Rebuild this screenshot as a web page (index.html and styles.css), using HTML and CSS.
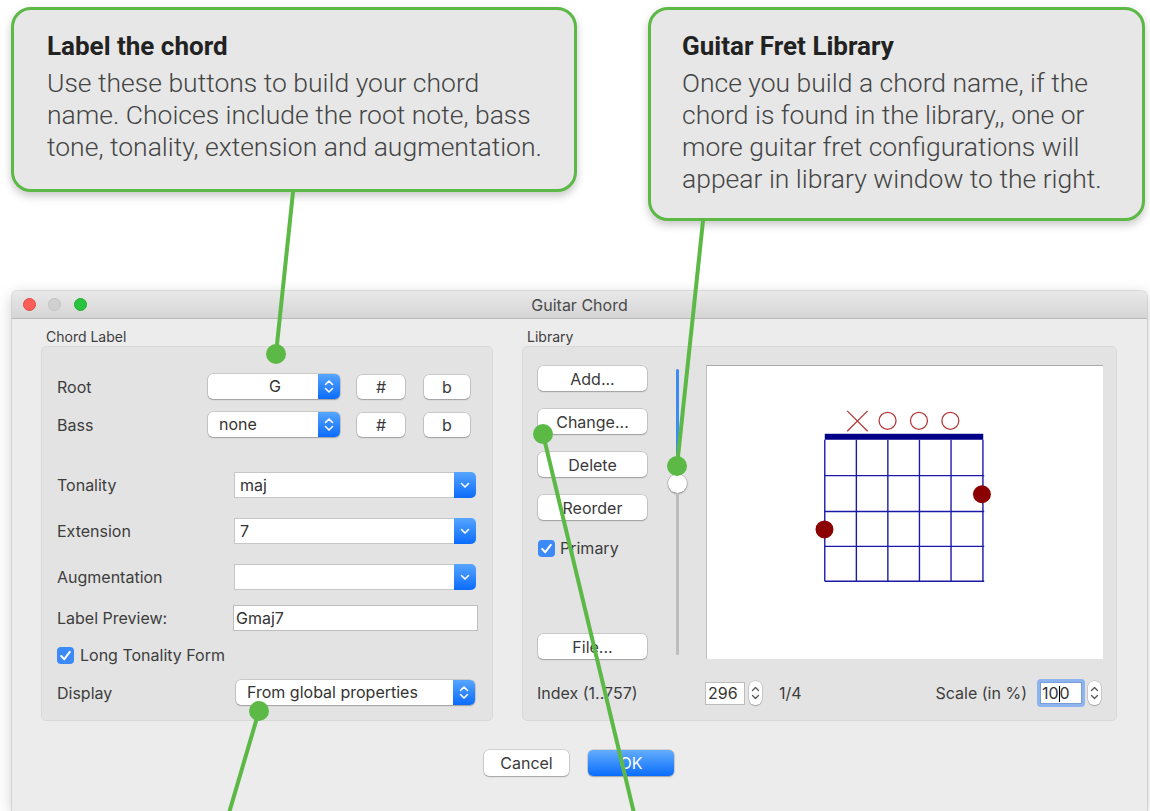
FILE: index.html
```html
<!DOCTYPE html>
<html lang="en">
<head>
    <meta charset="UTF-8">
    <title>Guitar Chord</title>
    <link rel="stylesheet" href="styles.css">
</head>
<body>
<div id="page">
    <div id="callouts">
        <div class="callout callout-left">
            <h2>Label the chord</h2>
            <p>Use these buttons to build your chord<br>name. Choices include the root note, bass<br>tone, tonality, extension and augmentation.</p>
        </div>
        <div class="callout callout-right">
            <h2>Guitar Fret Library</h2>
            <p>Once you build a chord name, if the<br>chord is found in the library,, one or<br>more guitar fret configurations will<br>appear in library window to the right.</p>
        </div>
    </div>

    <div id="window">
        <div class="titlebar">
            <div class="lights">
                <span class="light red"></span>
                <span class="light gray"></span>
                <span class="light green"></span>
            </div>
            <div class="title">Guitar Chord</div>
            <div></div>
        </div>

        <div class="content">
            <div class="groups">
                <div class="group chord-group">
                    <div class="group-label">Chord Label</div>
                    <div class="box chord-box">
                        <div class="row">
                            <span class="lbl lbl-pop">Root</span>
                            <div class="popup popup-note">
                                <span class="pop-text center">G</span>
                                <span class="stepper"><svg viewBox="0 0 22 25"><path d="M7.5 10.5 L11 7 L14.5 10.5 M7.5 14.5 L11 18 L14.5 14.5"/></svg></span>
                            </div>
                            <div class="btn mini sharp">#</div>
                            <div class="btn mini flat">b</div>
                        </div>
                        <div class="row row-bass">
                            <span class="lbl lbl-pop">Bass</span>
                            <div class="popup popup-note">
                                <span class="pop-text">none</span>
                                <span class="stepper"><svg viewBox="0 0 22 25"><path d="M7.5 10.5 L11 7 L14.5 10.5 M7.5 14.5 L11 18 L14.5 14.5"/></svg></span>
                            </div>
                            <div class="btn mini sharp">#</div>
                            <div class="btn mini flat">b</div>
                        </div>
                        <div class="row row-tonality">
                            <span class="lbl lbl-combo">Tonality</span>
                            <div class="combo">
                                <span class="combo-text">maj</span>
                                <span class="combo-arrow"><svg viewBox="0 0 22 26"><path d="M7.5 11.5 L11 15 L14.5 11.5"/></svg></span>
                            </div>
                        </div>
                        <div class="row row-gap">
                            <span class="lbl lbl-combo">Extension</span>
                            <div class="combo">
                                <span class="combo-text">7</span>
                                <span class="combo-arrow"><svg viewBox="0 0 22 26"><path d="M7.5 11.5 L11 15 L14.5 11.5"/></svg></span>
                            </div>
                        </div>
                        <div class="row row-gap">
                            <span class="lbl lbl-combo">Augmentation</span>
                            <div class="combo">
                                <span class="combo-text"></span>
                                <span class="combo-arrow"><svg viewBox="0 0 22 26"><path d="M7.5 11.5 L11 15 L14.5 11.5"/></svg></span>
                            </div>
                        </div>
                        <div class="row row-preview">
                            <span class="lbl lbl-preview">Label Preview:</span>
                            <div class="field preview-field">Gmaj7</div>
                        </div>
                        <div class="row row-check">
                            <span class="check"><svg viewBox="0 0 17 17"><path d="M4.2 9 L7.3 12.2 L12.8 4.8"/></svg></span>
                            <span class="check-text">Long Tonality Form</span>
                        </div>
                        <div class="row row-display">
                            <span class="lbl lbl-display">Display</span>
                            <div class="popup popup-display">
                                <span class="pop-text">From global properties</span>
                                <span class="stepper"><svg viewBox="0 0 22 25"><path d="M7.5 10.5 L11 7 L14.5 10.5 M7.5 14.5 L11 18 L14.5 14.5"/></svg></span>
                            </div>
                        </div>
                    </div>
                </div>

                <div class="group library-group">
                    <div class="group-label">Library</div>
                    <div class="box library-box">
                        <div class="lib-top">
                            <div class="lib-buttons">
                                <div class="btn lib-btn">Add...</div>
                                <div class="btn lib-btn">Change...</div>
                                <div class="btn lib-btn">Delete</div>
                                <div class="btn lib-btn">Reorder</div>
                                <div class="lib-check">
                                    <span class="check small"><svg viewBox="0 0 17 17"><path d="M4.2 9 L7.3 12.2 L12.8 4.8"/></svg></span>
                                    <span class="check-text">Primary</span>
                                </div>
                                <div class="btn lib-btn file-btn">File...</div>
                            </div>
                            <div class="slider">
                                <span class="track track-on"></span>
                                <span class="knob"></span>
                                <span class="track track-off"></span>
                            </div>
                            <div class="view">
                                <svg class="diagram" viewBox="0 0 397 294">
                                    <g class="marks">
                                        <path d="M140.5 45 L161 65.5 M140.5 65.5 L161 45"/>
                                        <circle cx="181" cy="55" r="8.5"/>
                                        <circle cx="212.5" cy="55" r="8.5"/>
                                        <circle cx="244" cy="55" r="8.5"/>
                                    </g>
                                    <rect class="nut" x="118" y="68" width="159" height="6"/>
                                    <g class="grid">
                                        <path d="M118 74 V216 M149.7 74 V216 M181.3 74 V216 M213 74 V216 M244.7 74 V216 M276.7 74 V216"/>
                                        <path d="M118 110 H278 M118 146 H278 M118 181 H278 M118 216 H278"/>
                                    </g>
                                    <circle class="dot" cx="275.7" cy="128.7" r="9"/>
                                    <circle class="dot" cx="117.7" cy="164" r="9"/>
                                </svg>
                            </div>
                        </div>
                        <div class="lib-bottom">
                            <span class="index-label">Index (1..757)</span>
                            <div class="field num-field">296</div>
                            <span class="mini-stepper"><svg viewBox="0 0 13 24"><path d="M3.5 9.5 L6.5 6.5 L9.5 9.5 M3.5 14.5 L6.5 17.5 L9.5 14.5"/></svg></span>
                            <span class="count">1/4</span>
                            <span class="spacer"></span>
                            <span class="scale-label">Scale (in %)</span>
                            <div class="focus-ring"><div class="field scale-field">10<span class="caret"></span>0</div></div>
                            <span class="mini-stepper scale-stepper"><svg viewBox="0 0 13 24"><path d="M3.5 9.5 L6.5 6.5 L9.5 9.5 M3.5 14.5 L6.5 17.5 L9.5 14.5"/></svg></span>
                        </div>
                    </div>
                </div>
            </div>

            <div class="actions">
                <div class="btn action">Cancel</div>
                <div class="btn action ok">OK</div>
            </div>
        </div>
    </div>

    <svg id="pointers" viewBox="0 0 1150 811">
        <line x1="293" y1="192" x2="276" y2="354"/>
        <circle cx="276" cy="354" r="10"/>
        <line x1="703" y1="221" x2="677" y2="466"/>
        <circle cx="677" cy="466" r="10"/>
        <line x1="259" y1="711" x2="229" y2="813"/>
        <circle cx="259" cy="711" r="10"/>
        <line x1="543" y1="434" x2="634" y2="813"/>
        <circle cx="543" cy="434" r="10"/>
    </svg>
</div>
</body>
</html>
```

FILE: styles.css
```css
* {
    margin: 0;
    padding: 0;
    box-sizing: border-box;
}

body {
    width: 1150px;
    height: 811px;
    overflow: hidden;
    background: #fff;
    font-family: Inter, "Liberation Sans", sans-serif;
    color: #333;
}

#page {
    position: relative;
    height: 811px;
}

/* callouts */
#callouts {
    display: flex;
    align-items: flex-start;
    height: 291px;
    padding: 7px 0 0 11px;
}

.callout {
    background: #e6e7e6;
    border: 3px solid #5cb946;
    border-radius: 20px;
    box-shadow: 0 4px 8px rgba(0, 0, 0, 0.22);
    font-family: "Roboto Light", Roboto, "Liberation Sans", sans-serif;
    padding: 20px 10px 0 33px;
}

.callout h2 {
    font-family: Roboto, "Liberation Sans", sans-serif;
    font-size: 26px;
    font-weight: 700;
    line-height: 32px;
    color: #222;
    margin-bottom: 5px;
}

.callout p {
    font-size: 26.5px;
    font-weight: 300;
    line-height: 32px;
    color: #444;
    white-space: nowrap;
}

.callout-left {
    width: 566px;
    height: 185px;
}

.callout-right {
    width: 497px;
    height: 214px;
    margin-left: 71px;
    padding-left: 31px;
}

/* window */
#window {
    margin-left: 12px;
    width: 1135px;
    height: 520px;
    background: #ececec;
    border-radius: 5px 5px 0 0;
    box-shadow: 0 0 0 1px rgba(0, 0, 0, 0.1), 0 4px 16px rgba(0, 0, 0, 0.2);
    overflow: hidden;
}

.titlebar {
    height: 28px;
    display: grid;
    grid-template-columns: 1fr auto 1fr;
    align-items: center;
    background: linear-gradient(#e9e9e9, #d5d5d5);
    border-bottom: 1px solid #b9b9b9;
}

.lights {
    display: flex;
    gap: 12.5px;
    padding-left: 10.5px;
}

.light {
    width: 13px;
    height: 13px;
    border-radius: 50%;
}

.red {
    background: #fc5f57;
    border: 1px solid #e2463f;
}

.gray {
    background: #d0d0d0;
    border: 1px solid #c2c2c2;
}

.green {
    background: #2ac33f;
    border: 1px solid #1eac2c;
}

.title {
    font-size: 16px;
    color: #4a4a4a;
}

.content {
    padding: 10px 30px 0 29px;
}

.groups {
    display: flex;
    gap: 29px;
}

.group-label {
    font-size: 14px;
    line-height: 16px;
    margin-left: 5px;
    color: #3c3c3c;
}

.box {
    margin-top: 1px;
    height: 375px;
    background: #e3e3e3;
    border: 1px solid #d9d9d9;
    border-radius: 5px;
}

.chord-group {
    width: 452px;
}

.library-group {
    width: 595px;
}

/* chord label box */
.chord-box {
    padding: 27px 0 0 15px;
}

.row {
    display: flex;
    align-items: center;
    font-size: 16px;
    color: #3d3d3d;
}

.row-bass {
    margin-top: 13px;
}

.row-tonality {
    margin-top: 35px;
}

.row-gap {
    margin-top: 20px;
}

.row-preview {
    margin-top: 15px;
}

.row-check {
    margin-top: 14px;
}

.row-display {
    margin-top: 15px;
}

.lbl-pop {
    width: 151px;
}

.lbl-combo {
    width: 177px;
}

.lbl-preview {
    width: 176px;
}

.lbl-display {
    width: 179px;
}

.popup {
    display: flex;
    height: 25px;
    background: #fff;
    border-radius: 5px;
    box-shadow: 0 0 0 0.5px rgba(0, 0, 0, 0.22), 0 1px 1.5px rgba(0, 0, 0, 0.22);
}

.popup-note {
    width: 132px;
}

.popup-display {
    width: 239px;
}

.pop-text {
    flex: 1;
    line-height: 25px;
    padding-left: 11px;
    color: #333;
}

.pop-text.center {
    text-align: center;
    padding-left: 24px;
}

.stepper {
    width: 22px;
    border-radius: 0 5px 5px 0;
    background: linear-gradient(#57a5ff, #0b6cfb);
}

.stepper svg,
.combo-arrow svg {
    display: block;
    width: 100%;
    height: 100%;
    fill: none;
    stroke: #fff;
    stroke-width: 1.6;
    stroke-linecap: round;
    stroke-linejoin: round;
}

.btn {
    display: flex;
    align-items: center;
    justify-content: center;
    background: #fff;
    border-radius: 5px;
    box-shadow: 0 0 0 0.5px rgba(0, 0, 0, 0.22), 0 1px 1.5px rgba(0, 0, 0, 0.22);
    font-size: 16px;
    color: #3a3a3a;
}

.mini {
    height: 24px;
}

.sharp {
    width: 48px;
    margin-left: 17px;
}

.flat {
    width: 46px;
    margin-left: 19px;
}

.combo {
    display: flex;
    width: 242px;
    height: 26px;
}

.combo-text {
    flex: 1;
    background: #fff;
    border: 1px solid #c6c6c6;
    border-right: 0;
    line-height: 24px;
    padding-left: 5px;
    color: #333;
}

.combo-arrow {
    width: 22px;
    border-radius: 0 5px 5px 0;
    background: linear-gradient(#57a5ff, #0b6cfb);
}

.field {
    background: #fff;
    border: 1px solid #bdbdbd;
    color: #333;
}

.preview-field {
    width: 245px;
    height: 26px;
    line-height: 24px;
    padding-left: 2px;
}

.check {
    width: 17px;
    height: 17px;
    border-radius: 4px;
    background: #3b8af7;
}

.check svg {
    display: block;
    width: 17px;
    height: 17px;
    fill: none;
    stroke: #fff;
    stroke-width: 2;
    stroke-linecap: round;
    stroke-linejoin: round;
}

.check-text {
    margin-left: 6px;
}

/* library box */
.library-box {
    padding: 18px 13px 0 15px;
}

.lib-top {
    display: flex;
    height: 294px;
}

.lib-buttons {
    width: 109px;
    display: flex;
    flex-direction: column;
}

.lib-btn {
    height: 25px;
    margin-top: 18px;
}

.lib-btn:first-child {
    margin-top: 1px;
}

.lib-check {
    display: flex;
    align-items: center;
    margin-top: 18px;
    font-size: 16px;
    color: #3d3d3d;
}

.lib-check .check-text {
    margin-left: 5px;
}

.file-btn {
    margin-top: auto;
}

.slider {
    width: 20px;
    margin-left: 20px;
    padding: 4px 0;
    display: flex;
    flex-direction: column;
    align-items: center;
}

.track {
    width: 3px;
    border-radius: 2px;
}

.track-on {
    height: 105px;
    background: #3d8bf5;
}

.track-off {
    flex: 1;
    background: #bdbdbd;
}

.knob {
    width: 19px;
    height: 19px;
    border-radius: 50%;
    background: #fff;
    box-shadow: 0 0 0 0.5px rgba(0, 0, 0, 0.25), 0 1px 2px rgba(0, 0, 0, 0.3);
}

.view {
    margin-left: 19px;
    width: 397px;
    background: #fff;
    border-top: 1px solid #a9a9a9;
    border-left: 1px solid #bdbdbd;
}

.diagram {
    display: block;
    width: 396px;
    height: 293px;
}

.marks path,
.marks circle {
    fill: none;
    stroke: #b23a3a;
    stroke-width: 1.3;
}

.nut {
    fill: #000088;
}

.grid path {
    fill: none;
    stroke: #1a1aa6;
    stroke-width: 1.4;
}

.dot {
    fill: #8b0000;
}

.lib-bottom {
    display: flex;
    align-items: center;
    height: 28px;
    margin-top: 20px;
    font-size: 16px;
    color: #3d3d3d;
}

.index-label {
    width: 168px;
    margin-left: -1px;
}

.num-field {
    width: 40px;
    height: 23px;
    line-height: 21px;
    padding-left: 2px;
}

.mini-stepper {
    width: 13px;
    height: 24px;
    margin-left: 4px;
    background: #fff;
    border-radius: 6px;
    box-shadow: 0 0 0 0.5px rgba(0, 0, 0, 0.2), 0 1px 1px rgba(0, 0, 0, 0.2);
}

.mini-stepper svg {
    display: block;
    width: 13px;
    height: 24px;
    fill: none;
    stroke: #555;
    stroke-width: 1.3;
    stroke-linecap: round;
    stroke-linejoin: round;
}

.count {
    margin-left: 17px;
}

.spacer {
    flex: 1;
}

.focus-ring {
    margin-left: 10px;
    padding: 3px;
    border-radius: 4px;
    background: #8db4ef;
}

.scale-field {
    width: 42px;
    height: 22px;
    line-height: 20px;
    padding-left: 1px;
    border-color: #7a9ed8;
}

.caret {
    display: inline-block;
    width: 1px;
    height: 16px;
    background: #000;
    vertical-align: -3px;
}

.scale-stepper {
    margin-left: 3px;
    margin-right: 2px;
}

/* bottom buttons */
.actions {
    display: flex;
    justify-content: center;
    gap: 19px;
    margin-top: 29px;
}

.action {
    width: 85px;
    height: 26px;
}

.ok {
    width: 86px;
    color: #fff;
    background: linear-gradient(#64adfc, #0a6dfd);
}

/* pointer lines over everything */
#pointers {
    position: absolute;
    left: 0;
    top: 0;
    width: 1150px;
    height: 811px;
    pointer-events: none;
}

#pointers line {
    stroke: #5cb946;
    stroke-width: 4;
    stroke-linecap: round;
}

#pointers circle {
    fill: #5cb946;
}
```
